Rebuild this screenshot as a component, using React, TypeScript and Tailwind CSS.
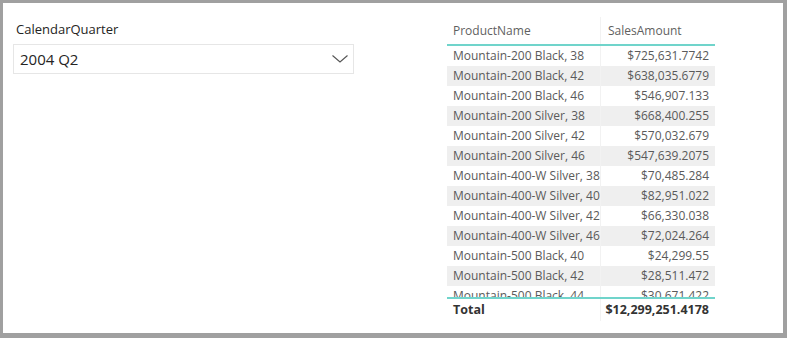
import React from "react";

const rows: [string, string][] = [
  ["Mountain-200 Black, 38", "$725,631.7742"],
  ["Mountain-200 Black, 42", "$638,035.6779"],
  ["Mountain-200 Black, 46", "$546,907.133"],
  ["Mountain-200 Silver, 38", "$668,400.255"],
  ["Mountain-200 Silver, 42", "$570,032.679"],
  ["Mountain-200 Silver, 46", "$547,639.2075"],
  ["Mountain-400-W Silver, 38", "$70,485.284"],
  ["Mountain-400-W Silver, 40", "$82,951.022"],
  ["Mountain-400-W Silver, 42", "$66,330.038"],
  ["Mountain-400-W Silver, 46", "$72,024.264"],
  ["Mountain-500 Black, 40", "$24,299.55"],
  ["Mountain-500 Black, 42", "$28,511.472"],
  ["Mountain-500 Black, 44", "$30,671.422"],
];

export default function App() {
  return (
    <div
      className="w-[787px] h-[338px] bg-[#a0a0a0] pt-[3px] pl-[3px] pr-[4px] pb-[5px]"
      style={{ fontFamily: '"Open Sans", "Noto Sans", sans-serif' }}
    >
      <div className="w-full h-full bg-white flex">
        <div className="w-[351px] pl-[10px] pt-[13px] flex flex-col">
          <div className="pl-[3px] text-[13px] leading-[26px] text-[#252423]">CalendarQuarter</div>
          <div className="mt-[2px] h-[30px] w-[341px] border border-[#e6e6e6] flex items-center justify-between pl-[6px] pr-[4px]">
            <span className="text-[15px] text-[#252423]">2004 Q2</span>
            <svg width="18" height="10" viewBox="0 0 18 10" fill="none">
              <path d="M1.5 1.5 L9 8 L16.5 1.5" stroke="#555" strokeWidth="1.1" />
            </svg>
          </div>
        </div>
        <div className="ml-[93px] pt-[14px] w-[268px] flex flex-col text-[12px]">
          <div className="flex h-[29px] border-b-2 border-[#70d4cb]">
            <div className="w-[154px] pl-[6px] flex items-center text-[#5f5f5f] border-r border-[#f2f2f2]">ProductName</div>
            <div className="flex-1 pl-[7px] flex items-center text-[#5f5f5f]">SalesAmount</div>
          </div>
          <div className="h-[253px] overflow-hidden border-b-2 border-[#70d4cb]">
            {rows.map(([n, v], i) => (
              <div key={n} className={`flex h-[20px] shrink-0 ${i % 2 === 1 ? "bg-[#efefef]" : "bg-white"}`}>
                <div className="w-[154px] pl-[6px] flex items-center text-[#5a5a5a] border-r border-[#f2f2f2] whitespace-nowrap">{n}</div>
                <div className="flex-1 pr-[6px] flex items-center justify-end text-[#5a5a5a] whitespace-nowrap">{v}</div>
              </div>
            ))}
          </div>
          <div className="flex h-[22px] font-bold text-[#333] text-[12.5px]">
            <div className="w-[154px] pl-[6px] flex items-center border-r border-[#f2f2f2]">Total</div>
            <div className="flex-1 pr-[6px] flex items-center justify-end">$12,299,251.4178</div>
          </div>
        </div>
      </div>
    </div>
  );
}
